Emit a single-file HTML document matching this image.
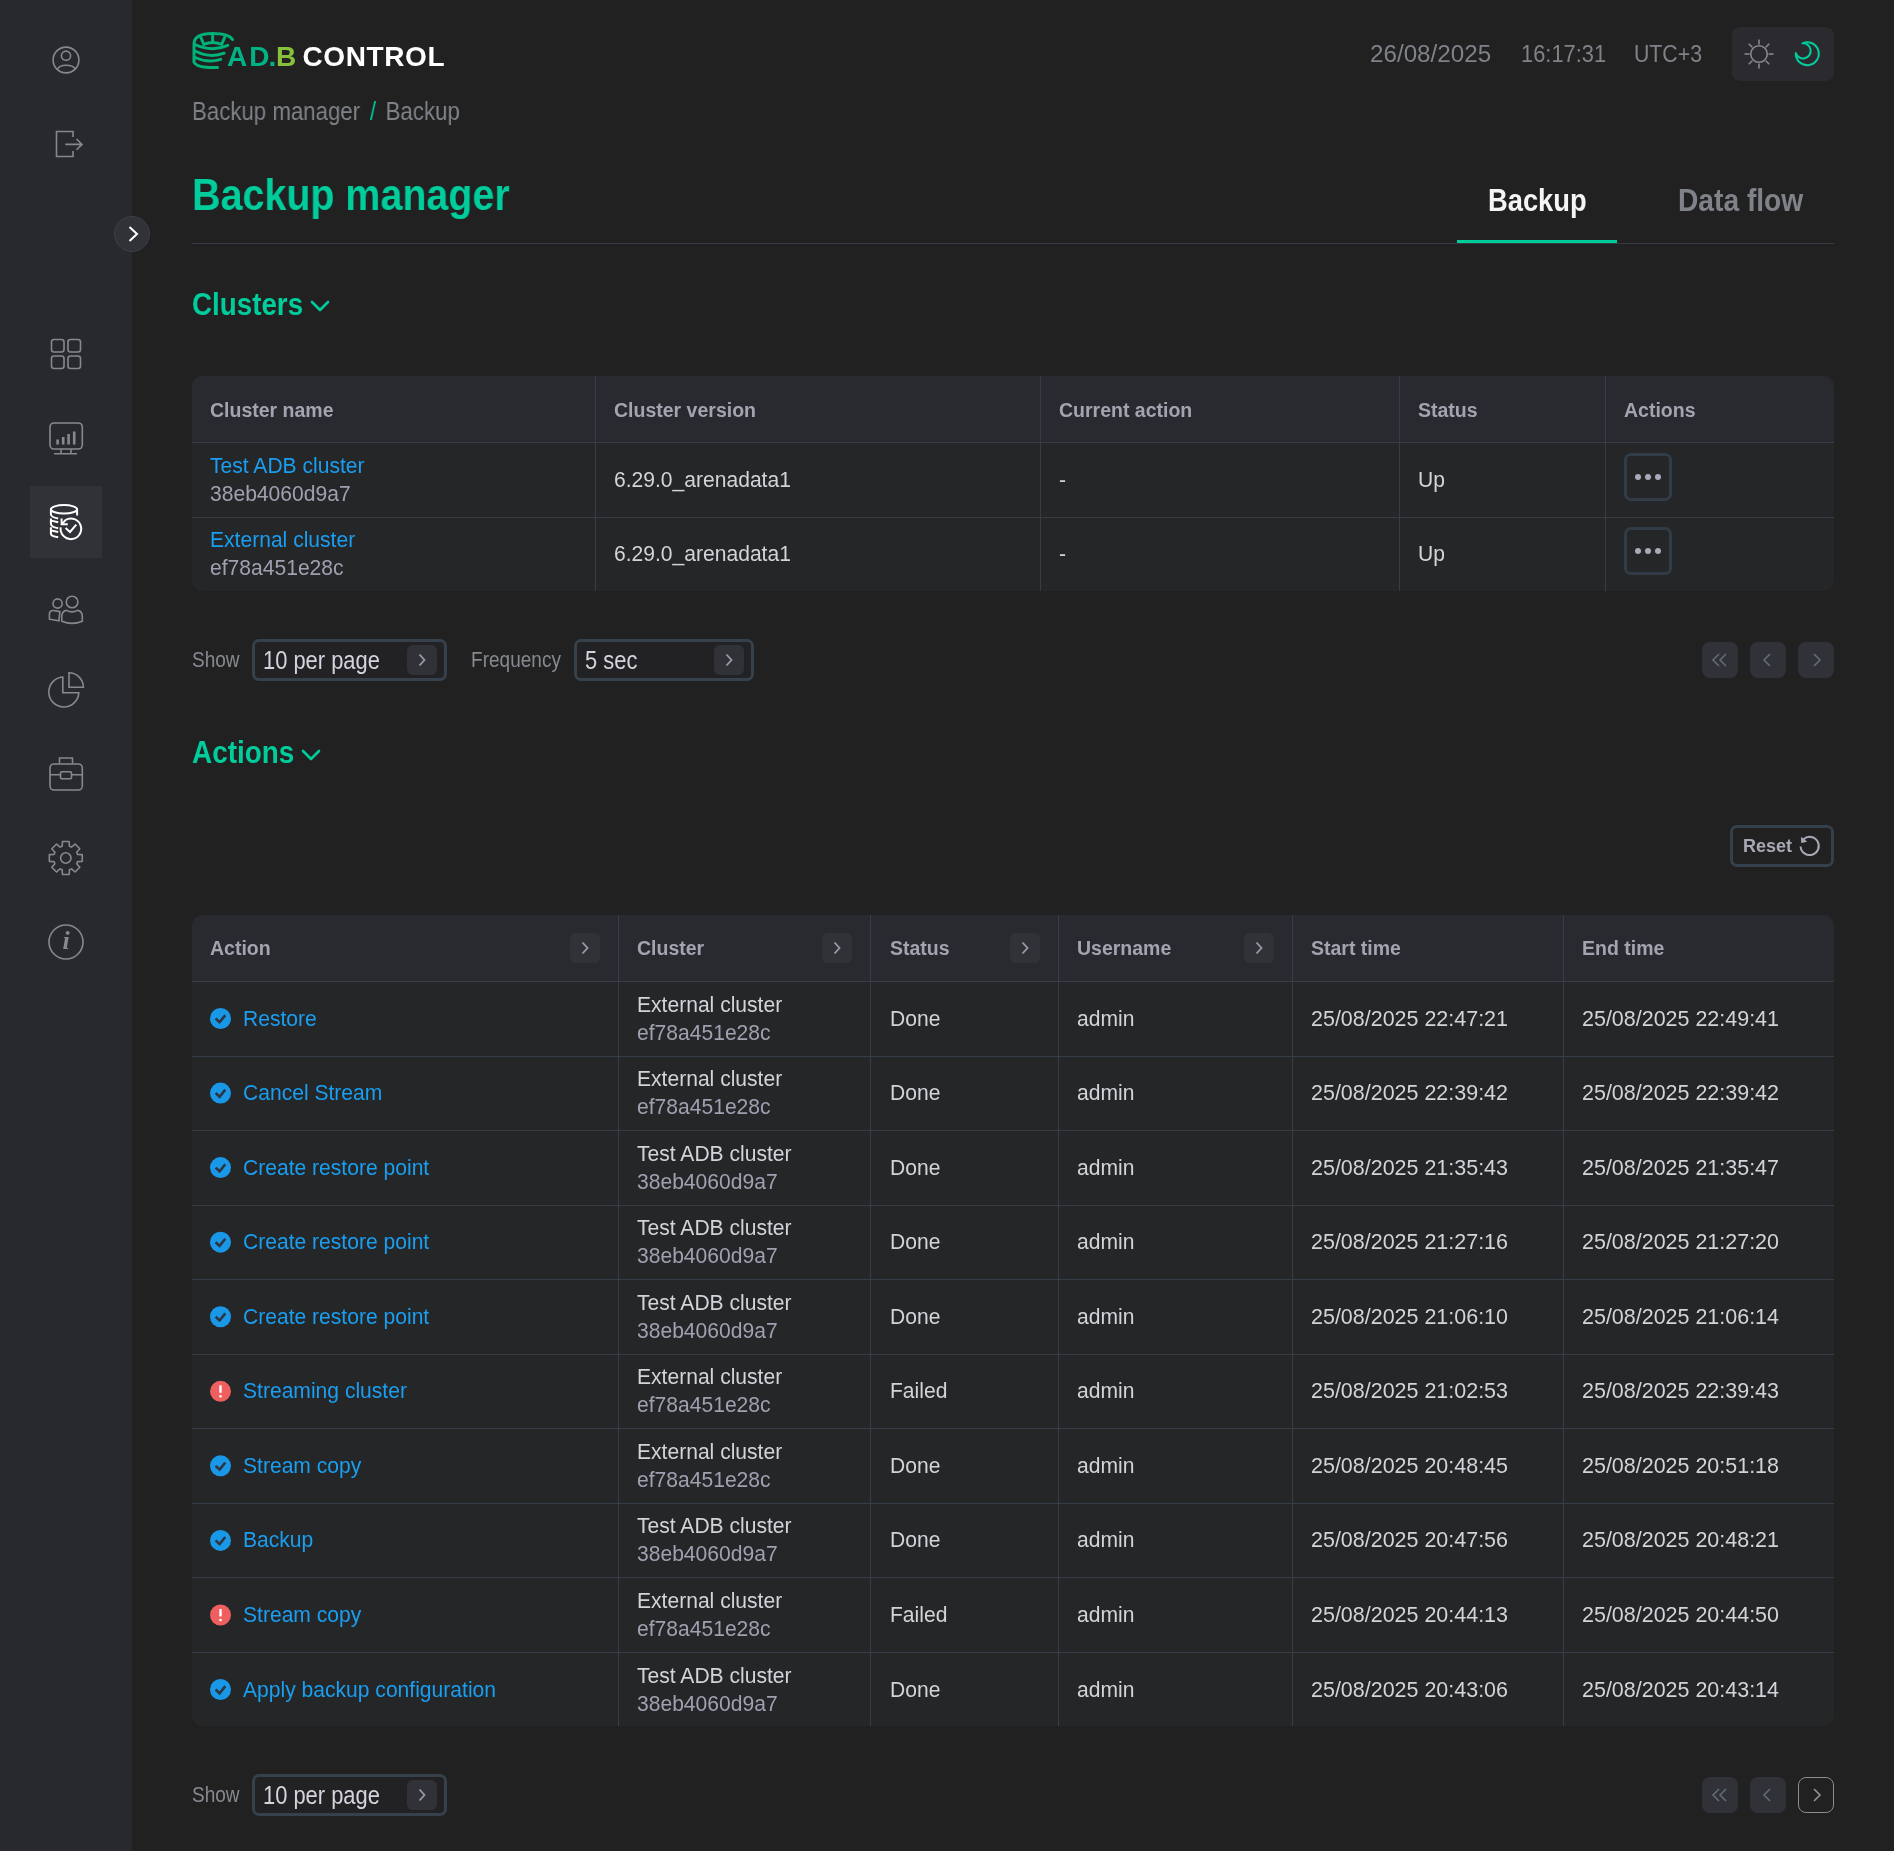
<!DOCTYPE html><html><head><meta charset="utf-8"><style>
*{margin:0;padding:0;box-sizing:border-box}
html,body{width:1894px;height:1851px;overflow:hidden;background:#212121;font-family:"Liberation Sans",sans-serif}
.a{position:absolute;white-space:nowrap}
#root{position:absolute;left:0;top:0;width:1894px;height:1851px;will-change:transform}
svg{position:absolute;overflow:visible}
</style></head><body><div id="root">

<div class="a" style="left:0;top:0;width:132px;height:1851px;background:#28292d"></div>
<div class="a" style="left:30px;top:486px;width:72px;height:72px;background:#313238"></div>
<div class="a" style="left:114px;top:216px;width:36px;height:36px;border-radius:50%;background:#313238;border:1px solid #3a414b"></div>
<svg style="left:0;top:0" width="1894" height="1851"><path d="M129.5 227 L137 234 L129.5 241" fill="none" stroke="#fff" stroke-width="2"/></svg>
<svg style="left:0;top:0" width="132" height="1000" fill="none" stroke="#85898f" stroke-width="1.6">
<circle cx="66" cy="60" r="12.9"/><circle cx="66" cy="55.7" r="4.6"/><path d="M57.8 68.8 C60 64 72 64 75.3 68.8"/>
<path d="M73 137 V131.5 H56.5 V156.5 H73 V151"/><path d="M65.3 144.4 H82 M76.5 139 L82 144.4 L76.5 149.8"/>
<rect x="51.5" y="339.5" width="12.5" height="12.5" rx="2.5"/><rect x="68" y="339.5" width="12.5" height="12.5" rx="2.5"/>
<rect x="51.5" y="356" width="12.5" height="12.5" rx="2.5"/><rect x="68" y="356" width="12.5" height="12.5" rx="2.5"/>
<rect x="50" y="423" width="32.3" height="26" rx="4"/><path d="M61 449 V453.5 M71 449 V453.5 M54 453.8 H77"/>
<path d="M57.6 444.5 V439.5 M63.2 444.5 V437 M68.6 444.5 V434 M74.2 444.5 V431.5" stroke-width="2.6"/>
<circle cx="57.6" cy="603.5" r="4.6"/><path d="M59.8 611.6 L53.6 610.5 Q49.4 610.4 49.4 614.2 V619.2 L59 620.9 Z"/>
<circle cx="72.1" cy="602" r="5.8"/><path d="M61.8 621.2 V616.5 Q61.8 611.3 66.4 610.4 Q72.1 613.4 77.7 610.4 Q82.3 611.3 82.3 616.5 V621.2 Q72.1 625.6 61.8 621.2 Z"/>
<path d="M62.8 677 A15 15 0 1 0 78.8 692.7 H62.8 Z"/><path d="M69 672.8 V687.3 H83.4 A14.5 14.5 0 0 0 69 672.8 Z"/>
<rect x="50" y="764" width="32.3" height="26" rx="4"/><path d="M59.5 763.5 V758 H72.5 V763.5 M50 774.8 H60.5 M71.5 774.8 H82.3"/><rect x="60.5" y="771.8" width="11" height="7" rx="1.2"/>
<circle cx="66" cy="942" r="17"/>
</svg>
<svg style="left:0;top:0" width="132" height="1000"><path d="M62.17 846.25 L62.46 841.53 L69.14 841.53 L69.43 846.25 L71.54 847.12 L75.08 844.00 L79.80 848.72 L76.68 852.26 L77.55 854.37 L82.27 854.66 L82.27 861.34 L77.55 861.63 L76.68 863.74 L79.80 867.28 L75.08 872.00 L71.54 868.88 L69.43 869.75 L69.14 874.47 L62.46 874.47 L62.17 869.75 L60.06 868.88 L56.52 872.00 L51.80 867.28 L54.92 863.74 L54.05 861.63 L49.33 861.34 L49.33 854.66 L54.05 854.37 L54.92 852.26 L51.80 848.72 L56.52 844.00 L60.06 847.12 Z" fill="none" stroke="#85898f" stroke-width="1.6" stroke-linejoin="round"/><circle cx="65.8" cy="858" r="5.2" fill="none" stroke="#85898f" stroke-width="1.6"/></svg>
<div class="a" style="left:57px;top:926px;width:18px;height:30px;font-family:'Liberation Serif';font-style:italic;font-weight:700;font-size:26px;color:#85898f;text-align:center;line-height:30px">i</div>
<svg style="left:0;top:0" width="132" height="1000" fill="none" stroke="#fff" stroke-width="2">
<ellipse cx="64" cy="509.3" rx="13.1" ry="4.2"/>
<path d="M50.9 509.3 V514.5 Q51.2 517.2 58.2 518.4"/>
<path d="M77.1 509.3 V515.5"/>
<path d="M50.9 518.6 V524 Q51.2 527 58.2 528.3 M51.2 520.6 L58.2 522.2"/>
<path d="M50.9 527.3 V533.6 Q51.2 536.4 58.2 537.2 M51.2 530.4 L58.2 531.9"/>
<path d="M60.7 527.4 A10.3 10.3 0 1 0 65.6 520 L62.2 523.6"/>
<path d="M61.6 518.5 V524.2 H67.8" stroke-linejoin="miter"/>
<path d="M65.6 528 L70 532 L76.3 524.7"/>
</svg>
<svg style="left:0;top:0" width="460" height="90" fill="none" stroke="#00b27a" stroke-width="3" stroke-linecap="round">
<path d="M217.5 67.5 Q196 68 194 62 V44 Q194 33.5 212.6 33.5 Q229 33.5 232.5 39.5"/>
<path d="M200.8 37.3 L203.8 44.3 Q212.6 40.5 221.6 44.3 L224.7 37.3"/>
<path d="M212.6 35 V41.5"/>
<path d="M195 44.5 Q212 52.5 227.8 45.3"/>
<path d="M195 51 Q210 58.5 224.2 53.2"/>
<path d="M195 57.5 Q208 63.5 220.7 59.4"/>
</svg>
<div class="a" style="left:227px;top:39px;font-size:28px;font-weight:700;line-height:36px;letter-spacing:2px;color:#00b386">AD</div>
<div class="a" style="left:268.5px;top:39px;font-size:28px;font-weight:700;line-height:36px;letter-spacing:0px;color:#00b386">.</div>
<div class="a" style="left:276px;top:39px;font-size:28px;font-weight:700;line-height:36px;letter-spacing:0px;color:#86c03c">B</div>
<div class="a" style="left:302.5px;top:39px;font-size:28px;font-weight:700;line-height:36px;letter-spacing:0.6px;color:#fff">CONTROL</div>
<div class="a" style="left:1370px;top:38px;font-size:23.5px;line-height:32px;color:#7f8288;transform:scaleX(1.03);transform-origin:0 0">26/08/2025</div>
<div class="a" style="left:1521px;top:38px;font-size:23.5px;line-height:32px;color:#7f8288;transform:scaleX(0.93);transform-origin:0 0">16:17:31</div>
<div class="a" style="left:1634px;top:38px;font-size:23.5px;line-height:32px;color:#7f8288;transform:scaleX(0.905);transform-origin:0 0">UTC+3</div>
<div class="a" style="left:1732px;top:27px;width:102px;height:54px;border-radius:8px;background:#2a2a2f"></div>
<svg style="left:0;top:0" width="1894" height="100" fill="none" stroke="#85898f" stroke-width="1.6"><circle cx="1759" cy="54" r="8.3"/><path d="M1768.50 54.00 L1773.50 54.00"/><path d="M1765.72 60.72 L1769.25 64.25"/><path d="M1759.00 63.50 L1759.00 68.50"/><path d="M1752.28 60.72 L1748.75 64.25"/><path d="M1749.50 54.00 L1744.50 54.00"/><path d="M1752.28 47.28 L1748.75 43.75"/><path d="M1759.00 44.50 L1759.00 39.50"/><path d="M1765.72 47.28 L1769.25 43.75"/></svg>
<svg style="left:0;top:0" width="1894" height="100" fill="none" stroke="#00cc9c" stroke-width="2" stroke-linejoin="round"><path d="M1802.4 43.3 A11.5 11.5 0 1 1 1795.8 53 A7.6 7.6 0 1 0 1802.4 43.3 Z"/></svg>
<div class="a" style="left:192px;top:96px;font-size:25.5px;line-height:30px;color:#7f8288;transform:scaleX(0.872);transform-origin:0 0">Backup manager <span style="color:#00cc9c;padding:0 4px">/</span> Backup</div>
<div class="a" style="left:192px;top:171.5px;font-size:44.5px;font-weight:700;line-height:46px;color:#00cc9c;transform:scaleX(0.886);transform-origin:0 0">Backup manager</div>
<div class="a" style="left:1488px;top:182.5px;font-size:31.3px;font-weight:700;line-height:36px;color:#f5f5f5;transform:scaleX(0.873);transform-origin:0 0">Backup</div>
<div class="a" style="left:1678px;top:182.5px;font-size:31.3px;font-weight:700;line-height:36px;color:#7f8288;transform:scaleX(0.9);transform-origin:0 0">Data flow</div>
<div class="a" style="left:192px;top:243px;width:1642px;height:1px;background:#363c44"></div>
<div class="a" style="left:1457px;top:240px;width:160px;height:3px;background:#00cc9c"></div>
<div class="a" style="left:192px;top:287.5px;font-size:31.2px;font-weight:700;line-height:34px;color:#00cc9c;transform:scaleX(0.89);transform-origin:0 0">Clusters</div>
<svg style="left:0;top:0" width="400" height="1000" fill="none" stroke="#00cc9c" stroke-width="2.6" stroke-linecap="round" stroke-linejoin="round"><path d="M312 302 L320.0 310 L328 302"/></svg>
<div class="a" style="left:192px;top:735.5px;font-size:31.2px;font-weight:700;line-height:34px;color:#00cc9c;transform:scaleX(0.895);transform-origin:0 0">Actions</div>
<svg style="left:0;top:0" width="400" height="1000" fill="none" stroke="#00cc9c" stroke-width="2.6" stroke-linecap="round" stroke-linejoin="round"><path d="M303 751 L311.0 759 L319 751"/></svg>
<div class="a" style="left:192px;top:376px;width:1642px;height:215px;border-radius:10px;background:#252628;overflow:hidden"><div style="position:absolute;left:0;top:0;width:100%;height:66px;background:#292a2f"></div></div>
<div class="a" style="left:192px;top:442px;width:1642px;height:1px;background:#353d46"></div>
<div class="a" style="left:192px;top:517px;width:1642px;height:1px;background:#353d46"></div>
<div class="a" style="left:595px;top:376px;width:1px;height:215px;background:#353d46"></div>
<div class="a" style="left:1040px;top:376px;width:1px;height:215px;background:#353d46"></div>
<div class="a" style="left:1399px;top:376px;width:1px;height:215px;background:#353d46"></div>
<div class="a" style="left:1605px;top:376px;width:1px;height:215px;background:#353d46"></div>
<div class="a" style="left:210px;top:396px;font-size:19.5px;font-weight:700;line-height:28px;color:#a3a4b0">Cluster name</div>
<div class="a" style="left:614px;top:396px;font-size:19.5px;font-weight:700;line-height:28px;color:#a3a4b0">Cluster version</div>
<div class="a" style="left:1059px;top:396px;font-size:19.5px;font-weight:700;line-height:28px;color:#a3a4b0">Current action</div>
<div class="a" style="left:1418px;top:396px;font-size:19.5px;font-weight:700;line-height:28px;color:#a3a4b0">Status</div>
<div class="a" style="left:1624px;top:396px;font-size:19.5px;font-weight:700;line-height:28px;color:#a3a4b0">Actions</div>
<div class="a" style="left:210px;top:452px;font-size:21.40px;line-height:28px;color:#1a9ef0;transform:scaleX(0.985);transform-origin:0 0">Test ADB cluster</div>
<div class="a" style="left:210px;top:480px;font-size:21.40px;line-height:28px;color:#a0a0b0;transform:scaleX(0.985);transform-origin:0 0">38eb4060d9a7</div>
<div class="a" style="left:614px;top:466px;font-size:21.40px;line-height:28px;color:#d3d4da;transform:scaleX(0.985);transform-origin:0 0;">6.29.0_arenadata1</div>
<div class="a" style="left:1059px;top:466px;font-size:21.40px;line-height:28px;color:#d3d4da;transform:scaleX(0.985);transform-origin:0 0;">-</div>
<div class="a" style="left:1418px;top:466px;font-size:21.40px;line-height:28px;color:#d3d4da;transform:scaleX(0.985);transform-origin:0 0;">Up</div>
<div class="a" style="left:210px;top:526px;font-size:21.40px;line-height:28px;color:#1a9ef0;transform:scaleX(0.985);transform-origin:0 0">External cluster</div>
<div class="a" style="left:210px;top:554px;font-size:21.40px;line-height:28px;color:#a0a0b0;transform:scaleX(0.985);transform-origin:0 0">ef78a451e28c</div>
<div class="a" style="left:614px;top:540px;font-size:21.40px;line-height:28px;color:#d3d4da;transform:scaleX(0.985);transform-origin:0 0;">6.29.0_arenadata1</div>
<div class="a" style="left:1059px;top:540px;font-size:21.40px;line-height:28px;color:#d3d4da;transform:scaleX(0.985);transform-origin:0 0;">-</div>
<div class="a" style="left:1418px;top:540px;font-size:21.40px;line-height:28px;color:#d3d4da;transform:scaleX(0.985);transform-origin:0 0;">Up</div>
<div class="a" style="left:1624px;top:453px;width:48px;height:48px;border:3px solid #323c47;border-radius:7px"></div>
<div class="a" style="left:1634.8px;top:473.8px;width:6.4px;height:6.4px;border-radius:50%;background:#a9a9b8"></div>
<div class="a" style="left:1644.8px;top:473.8px;width:6.4px;height:6.4px;border-radius:50%;background:#a9a9b8"></div>
<div class="a" style="left:1654.8px;top:473.8px;width:6.4px;height:6.4px;border-radius:50%;background:#a9a9b8"></div>
<div class="a" style="left:1624px;top:527px;width:48px;height:48px;border:3px solid #323c47;border-radius:7px"></div>
<div class="a" style="left:1634.8px;top:547.8px;width:6.4px;height:6.4px;border-radius:50%;background:#a9a9b8"></div>
<div class="a" style="left:1644.8px;top:547.8px;width:6.4px;height:6.4px;border-radius:50%;background:#a9a9b8"></div>
<div class="a" style="left:1654.8px;top:547.8px;width:6.4px;height:6.4px;border-radius:50%;background:#a9a9b8"></div>
<div class="a" style="left:192px;top:646px;font-size:21.4px;line-height:28px;color:#868990;transform:scaleX(0.89);transform-origin:0 0">Show</div>
<div class="a" style="left:252px;top:639px;width:195px;height:42px;border:3px solid #36414c;border-radius:7px;background:#222224"></div>
<div class="a" style="left:263px;top:646px;font-size:25px;line-height:28px;color:#d4d4de;transform:scaleX(0.876);transform-origin:0 0">10 per page</div>
<div class="a" style="left:407px;top:645px;width:30px;height:30px;border-radius:6px;background:#313237"></div>
<svg style="left:0;top:0" width="1894" height="1851" fill="none" stroke="#9a9ba8" stroke-width="1.8"><path d="M419.5 654.5 L424.5 660 L419.5 665.5"/></svg>
<div class="a" style="left:471px;top:646px;font-size:21.4px;line-height:28px;color:#868990;transform:scaleX(0.89);transform-origin:0 0">Frequency</div>
<div class="a" style="left:574px;top:639px;width:180px;height:42px;border:3px solid #36414c;border-radius:7px;background:#222224"></div>
<div class="a" style="left:585px;top:646px;font-size:25px;line-height:28px;color:#d4d4de;transform:scaleX(0.876);transform-origin:0 0">5 sec</div>
<div class="a" style="left:714px;top:645px;width:30px;height:30px;border-radius:6px;background:#313237"></div>
<svg style="left:0;top:0" width="1894" height="1851" fill="none" stroke="#9a9ba8" stroke-width="1.8"><path d="M726.5 654.5 L731.5 660 L726.5 665.5"/></svg>
<div class="a" style="left:1702px;top:642px;width:36px;height:36px;border-radius:8px;background:#313237"></div>
<svg style="left:0;top:0" width="1894" height="1851" fill="none" stroke="#5f6c76" stroke-width="1.6"><path d="M1719 654 L1713 660 L1719 666 M1726 654 L1720 660 L1726 666"/></svg>
<div class="a" style="left:1750px;top:642px;width:36px;height:36px;border-radius:8px;background:#313237"></div>
<svg style="left:0;top:0" width="1894" height="1851" fill="none" stroke="#5f6c76" stroke-width="1.6"><path d="M1770 654 L1764 660 L1770 666"/></svg>
<div class="a" style="left:1798px;top:642px;width:36px;height:36px;border-radius:8px;background:#313237"></div>
<svg style="left:0;top:0" width="1894" height="1851" fill="none" stroke="#5f6c76" stroke-width="1.6"><path d="M1814 654 L1820 660 L1814 666"/></svg>
<div class="a" style="left:1730px;top:825px;width:104px;height:42px;border:3px solid #34404b;border-radius:7px"></div>
<div class="a" style="left:1743px;top:832px;font-size:18px;font-weight:700;line-height:28px;color:#a8a9b6">Reset</div>
<svg style="left:0;top:0" width="1894" height="1851"><path d="M1800.6 846.5 A9.1 9.1 0 1 0 1803.6 839.2" fill="none" stroke="#a8a9b6" stroke-width="2"/><path d="M1801 836.8 L1801.2 843 L1807.2 841.8 Z" fill="#a8a9b6"/></svg>
<div class="a" style="left:192px;top:915px;width:1642px;height:811px;border-radius:10px;background:#252628;overflow:hidden"><div style="position:absolute;left:0;top:0;width:100%;height:66px;background:#292a2f"></div></div>
<div class="a" style="left:192px;top:981px;width:1642px;height:1px;background:#353d46"></div>
<div class="a" style="left:192px;top:1056px;width:1642px;height:1px;background:#353d46"></div>
<div class="a" style="left:192px;top:1130px;width:1642px;height:1px;background:#353d46"></div>
<div class="a" style="left:192px;top:1205px;width:1642px;height:1px;background:#353d46"></div>
<div class="a" style="left:192px;top:1279px;width:1642px;height:1px;background:#353d46"></div>
<div class="a" style="left:192px;top:1354px;width:1642px;height:1px;background:#353d46"></div>
<div class="a" style="left:192px;top:1428px;width:1642px;height:1px;background:#353d46"></div>
<div class="a" style="left:192px;top:1503px;width:1642px;height:1px;background:#353d46"></div>
<div class="a" style="left:192px;top:1577px;width:1642px;height:1px;background:#353d46"></div>
<div class="a" style="left:192px;top:1652px;width:1642px;height:1px;background:#353d46"></div>
<div class="a" style="left:618px;top:915px;width:1px;height:811px;background:#353d46"></div>
<div class="a" style="left:870px;top:915px;width:1px;height:811px;background:#353d46"></div>
<div class="a" style="left:1058px;top:915px;width:1px;height:811px;background:#353d46"></div>
<div class="a" style="left:1292px;top:915px;width:1px;height:811px;background:#353d46"></div>
<div class="a" style="left:1563px;top:915px;width:1px;height:811px;background:#353d46"></div>
<div class="a" style="left:210px;top:934px;font-size:19.5px;font-weight:700;line-height:28px;color:#a3a4b0">Action</div>
<div class="a" style="left:570px;top:933px;width:30px;height:30px;border-radius:6px;background:#313237"></div>
<svg style="left:0;top:0" width="1894" height="1851" fill="none" stroke="#9a9ba8" stroke-width="1.8"><path d="M582.5 942.5 L587.5 948 L582.5 953.5"/></svg>
<div class="a" style="left:637px;top:934px;font-size:19.5px;font-weight:700;line-height:28px;color:#a3a4b0">Cluster</div>
<div class="a" style="left:822px;top:933px;width:30px;height:30px;border-radius:6px;background:#313237"></div>
<svg style="left:0;top:0" width="1894" height="1851" fill="none" stroke="#9a9ba8" stroke-width="1.8"><path d="M834.5 942.5 L839.5 948 L834.5 953.5"/></svg>
<div class="a" style="left:890px;top:934px;font-size:19.5px;font-weight:700;line-height:28px;color:#a3a4b0">Status</div>
<div class="a" style="left:1010px;top:933px;width:30px;height:30px;border-radius:6px;background:#313237"></div>
<svg style="left:0;top:0" width="1894" height="1851" fill="none" stroke="#9a9ba8" stroke-width="1.8"><path d="M1022.5 942.5 L1027.5 948 L1022.5 953.5"/></svg>
<div class="a" style="left:1077px;top:934px;font-size:19.5px;font-weight:700;line-height:28px;color:#a3a4b0">Username</div>
<div class="a" style="left:1244px;top:933px;width:30px;height:30px;border-radius:6px;background:#313237"></div>
<svg style="left:0;top:0" width="1894" height="1851" fill="none" stroke="#9a9ba8" stroke-width="1.8"><path d="M1256.5 942.5 L1261.5 948 L1256.5 953.5"/></svg>
<div class="a" style="left:1311px;top:934px;font-size:19.5px;font-weight:700;line-height:28px;color:#a3a4b0">Start time</div>
<div class="a" style="left:1582px;top:934px;font-size:19.5px;font-weight:700;line-height:28px;color:#a3a4b0">End time</div>
<svg style="left:0;top:0" width="1894" height="1851"><circle cx="220.5" cy="1018.50" r="10.5" fill="#1a98e8"/><path d="M215.6 1018.50 L219.6 1022.20 L225.3 1015.10" fill="none" stroke="#2f3540" stroke-width="2.6"/></svg>
<div class="a" style="left:243px;top:1004.5px;font-size:21.40px;line-height:28px;color:#1a9ef0;transform:scaleX(0.985);transform-origin:0 0;">Restore</div>
<div class="a" style="left:637px;top:990.5px;font-size:21.40px;line-height:28px;color:#d3d4da;transform:scaleX(0.985);transform-origin:0 0">External cluster</div>
<div class="a" style="left:637px;top:1018.5px;font-size:21.40px;line-height:28px;color:#a0a0b0;transform:scaleX(0.985);transform-origin:0 0">ef78a451e28c</div>
<div class="a" style="left:890px;top:1004.5px;font-size:21.40px;line-height:28px;color:#d3d4da;transform:scaleX(0.985);transform-origin:0 0;">Done</div>
<div class="a" style="left:1077px;top:1004.5px;font-size:21.40px;line-height:28px;color:#d3d4da;transform:scaleX(0.985);transform-origin:0 0;">admin</div>
<div class="a" style="left:1311px;top:1004.5px;font-size:21.81px;line-height:28px;color:#d3d4da;transform:scaleX(0.985);transform-origin:0 0;">25/08/2025 22:47:21</div>
<div class="a" style="left:1582px;top:1004.5px;font-size:21.81px;line-height:28px;color:#d3d4da;transform:scaleX(0.985);transform-origin:0 0;">25/08/2025 22:49:41</div>
<svg style="left:0;top:0" width="1894" height="1851"><circle cx="220.5" cy="1093.06" r="10.5" fill="#1a98e8"/><path d="M215.6 1093.06 L219.6 1096.76 L225.3 1089.66" fill="none" stroke="#2f3540" stroke-width="2.6"/></svg>
<div class="a" style="left:243px;top:1079.06px;font-size:21.40px;line-height:28px;color:#1a9ef0;transform:scaleX(0.985);transform-origin:0 0;">Cancel Stream</div>
<div class="a" style="left:637px;top:1065.06px;font-size:21.40px;line-height:28px;color:#d3d4da;transform:scaleX(0.985);transform-origin:0 0">External cluster</div>
<div class="a" style="left:637px;top:1093.06px;font-size:21.40px;line-height:28px;color:#a0a0b0;transform:scaleX(0.985);transform-origin:0 0">ef78a451e28c</div>
<div class="a" style="left:890px;top:1079.06px;font-size:21.40px;line-height:28px;color:#d3d4da;transform:scaleX(0.985);transform-origin:0 0;">Done</div>
<div class="a" style="left:1077px;top:1079.06px;font-size:21.40px;line-height:28px;color:#d3d4da;transform:scaleX(0.985);transform-origin:0 0;">admin</div>
<div class="a" style="left:1311px;top:1079.06px;font-size:21.81px;line-height:28px;color:#d3d4da;transform:scaleX(0.985);transform-origin:0 0;">25/08/2025 22:39:42</div>
<div class="a" style="left:1582px;top:1079.06px;font-size:21.81px;line-height:28px;color:#d3d4da;transform:scaleX(0.985);transform-origin:0 0;">25/08/2025 22:39:42</div>
<svg style="left:0;top:0" width="1894" height="1851"><circle cx="220.5" cy="1167.62" r="10.5" fill="#1a98e8"/><path d="M215.6 1167.62 L219.6 1171.32 L225.3 1164.22" fill="none" stroke="#2f3540" stroke-width="2.6"/></svg>
<div class="a" style="left:243px;top:1153.62px;font-size:21.40px;line-height:28px;color:#1a9ef0;transform:scaleX(0.985);transform-origin:0 0;">Create restore point</div>
<div class="a" style="left:637px;top:1139.62px;font-size:21.40px;line-height:28px;color:#d3d4da;transform:scaleX(0.985);transform-origin:0 0">Test ADB cluster</div>
<div class="a" style="left:637px;top:1167.62px;font-size:21.40px;line-height:28px;color:#a0a0b0;transform:scaleX(0.985);transform-origin:0 0">38eb4060d9a7</div>
<div class="a" style="left:890px;top:1153.62px;font-size:21.40px;line-height:28px;color:#d3d4da;transform:scaleX(0.985);transform-origin:0 0;">Done</div>
<div class="a" style="left:1077px;top:1153.62px;font-size:21.40px;line-height:28px;color:#d3d4da;transform:scaleX(0.985);transform-origin:0 0;">admin</div>
<div class="a" style="left:1311px;top:1153.62px;font-size:21.81px;line-height:28px;color:#d3d4da;transform:scaleX(0.985);transform-origin:0 0;">25/08/2025 21:35:43</div>
<div class="a" style="left:1582px;top:1153.62px;font-size:21.81px;line-height:28px;color:#d3d4da;transform:scaleX(0.985);transform-origin:0 0;">25/08/2025 21:35:47</div>
<svg style="left:0;top:0" width="1894" height="1851"><circle cx="220.5" cy="1242.18" r="10.5" fill="#1a98e8"/><path d="M215.6 1242.18 L219.6 1245.88 L225.3 1238.78" fill="none" stroke="#2f3540" stroke-width="2.6"/></svg>
<div class="a" style="left:243px;top:1228.18px;font-size:21.40px;line-height:28px;color:#1a9ef0;transform:scaleX(0.985);transform-origin:0 0;">Create restore point</div>
<div class="a" style="left:637px;top:1214.18px;font-size:21.40px;line-height:28px;color:#d3d4da;transform:scaleX(0.985);transform-origin:0 0">Test ADB cluster</div>
<div class="a" style="left:637px;top:1242.18px;font-size:21.40px;line-height:28px;color:#a0a0b0;transform:scaleX(0.985);transform-origin:0 0">38eb4060d9a7</div>
<div class="a" style="left:890px;top:1228.18px;font-size:21.40px;line-height:28px;color:#d3d4da;transform:scaleX(0.985);transform-origin:0 0;">Done</div>
<div class="a" style="left:1077px;top:1228.18px;font-size:21.40px;line-height:28px;color:#d3d4da;transform:scaleX(0.985);transform-origin:0 0;">admin</div>
<div class="a" style="left:1311px;top:1228.18px;font-size:21.81px;line-height:28px;color:#d3d4da;transform:scaleX(0.985);transform-origin:0 0;">25/08/2025 21:27:16</div>
<div class="a" style="left:1582px;top:1228.18px;font-size:21.81px;line-height:28px;color:#d3d4da;transform:scaleX(0.985);transform-origin:0 0;">25/08/2025 21:27:20</div>
<svg style="left:0;top:0" width="1894" height="1851"><circle cx="220.5" cy="1316.74" r="10.5" fill="#1a98e8"/><path d="M215.6 1316.74 L219.6 1320.44 L225.3 1313.34" fill="none" stroke="#2f3540" stroke-width="2.6"/></svg>
<div class="a" style="left:243px;top:1302.74px;font-size:21.40px;line-height:28px;color:#1a9ef0;transform:scaleX(0.985);transform-origin:0 0;">Create restore point</div>
<div class="a" style="left:637px;top:1288.74px;font-size:21.40px;line-height:28px;color:#d3d4da;transform:scaleX(0.985);transform-origin:0 0">Test ADB cluster</div>
<div class="a" style="left:637px;top:1316.74px;font-size:21.40px;line-height:28px;color:#a0a0b0;transform:scaleX(0.985);transform-origin:0 0">38eb4060d9a7</div>
<div class="a" style="left:890px;top:1302.74px;font-size:21.40px;line-height:28px;color:#d3d4da;transform:scaleX(0.985);transform-origin:0 0;">Done</div>
<div class="a" style="left:1077px;top:1302.74px;font-size:21.40px;line-height:28px;color:#d3d4da;transform:scaleX(0.985);transform-origin:0 0;">admin</div>
<div class="a" style="left:1311px;top:1302.74px;font-size:21.81px;line-height:28px;color:#d3d4da;transform:scaleX(0.985);transform-origin:0 0;">25/08/2025 21:06:10</div>
<div class="a" style="left:1582px;top:1302.74px;font-size:21.81px;line-height:28px;color:#d3d4da;transform:scaleX(0.985);transform-origin:0 0;">25/08/2025 21:06:14</div>
<svg style="left:0;top:0" width="1894" height="1851"><circle cx="220.5" cy="1391.30" r="10.5" fill="#ef5f5f"/><path d="M220.5 1385.30 V1392.80" stroke="#fff" stroke-width="2.4"/><circle cx="220.5" cy="1396.30" r="1.3" fill="#fff"/></svg>
<div class="a" style="left:243px;top:1377.3px;font-size:21.40px;line-height:28px;color:#1a9ef0;transform:scaleX(0.985);transform-origin:0 0;">Streaming cluster</div>
<div class="a" style="left:637px;top:1363.3px;font-size:21.40px;line-height:28px;color:#d3d4da;transform:scaleX(0.985);transform-origin:0 0">External cluster</div>
<div class="a" style="left:637px;top:1391.3px;font-size:21.40px;line-height:28px;color:#a0a0b0;transform:scaleX(0.985);transform-origin:0 0">ef78a451e28c</div>
<div class="a" style="left:890px;top:1377.3px;font-size:21.40px;line-height:28px;color:#d3d4da;transform:scaleX(0.985);transform-origin:0 0;">Failed</div>
<div class="a" style="left:1077px;top:1377.3px;font-size:21.40px;line-height:28px;color:#d3d4da;transform:scaleX(0.985);transform-origin:0 0;">admin</div>
<div class="a" style="left:1311px;top:1377.3px;font-size:21.81px;line-height:28px;color:#d3d4da;transform:scaleX(0.985);transform-origin:0 0;">25/08/2025 21:02:53</div>
<div class="a" style="left:1582px;top:1377.3px;font-size:21.81px;line-height:28px;color:#d3d4da;transform:scaleX(0.985);transform-origin:0 0;">25/08/2025 22:39:43</div>
<svg style="left:0;top:0" width="1894" height="1851"><circle cx="220.5" cy="1465.86" r="10.5" fill="#1a98e8"/><path d="M215.6 1465.86 L219.6 1469.56 L225.3 1462.46" fill="none" stroke="#2f3540" stroke-width="2.6"/></svg>
<div class="a" style="left:243px;top:1451.8600000000001px;font-size:21.40px;line-height:28px;color:#1a9ef0;transform:scaleX(0.985);transform-origin:0 0;">Stream copy</div>
<div class="a" style="left:637px;top:1437.8600000000001px;font-size:21.40px;line-height:28px;color:#d3d4da;transform:scaleX(0.985);transform-origin:0 0">External cluster</div>
<div class="a" style="left:637px;top:1465.8600000000001px;font-size:21.40px;line-height:28px;color:#a0a0b0;transform:scaleX(0.985);transform-origin:0 0">ef78a451e28c</div>
<div class="a" style="left:890px;top:1451.8600000000001px;font-size:21.40px;line-height:28px;color:#d3d4da;transform:scaleX(0.985);transform-origin:0 0;">Done</div>
<div class="a" style="left:1077px;top:1451.8600000000001px;font-size:21.40px;line-height:28px;color:#d3d4da;transform:scaleX(0.985);transform-origin:0 0;">admin</div>
<div class="a" style="left:1311px;top:1451.8600000000001px;font-size:21.81px;line-height:28px;color:#d3d4da;transform:scaleX(0.985);transform-origin:0 0;">25/08/2025 20:48:45</div>
<div class="a" style="left:1582px;top:1451.8600000000001px;font-size:21.81px;line-height:28px;color:#d3d4da;transform:scaleX(0.985);transform-origin:0 0;">25/08/2025 20:51:18</div>
<svg style="left:0;top:0" width="1894" height="1851"><circle cx="220.5" cy="1540.42" r="10.5" fill="#1a98e8"/><path d="M215.6 1540.42 L219.6 1544.12 L225.3 1537.02" fill="none" stroke="#2f3540" stroke-width="2.6"/></svg>
<div class="a" style="left:243px;top:1526.42px;font-size:21.40px;line-height:28px;color:#1a9ef0;transform:scaleX(0.985);transform-origin:0 0;">Backup</div>
<div class="a" style="left:637px;top:1512.42px;font-size:21.40px;line-height:28px;color:#d3d4da;transform:scaleX(0.985);transform-origin:0 0">Test ADB cluster</div>
<div class="a" style="left:637px;top:1540.42px;font-size:21.40px;line-height:28px;color:#a0a0b0;transform:scaleX(0.985);transform-origin:0 0">38eb4060d9a7</div>
<div class="a" style="left:890px;top:1526.42px;font-size:21.40px;line-height:28px;color:#d3d4da;transform:scaleX(0.985);transform-origin:0 0;">Done</div>
<div class="a" style="left:1077px;top:1526.42px;font-size:21.40px;line-height:28px;color:#d3d4da;transform:scaleX(0.985);transform-origin:0 0;">admin</div>
<div class="a" style="left:1311px;top:1526.42px;font-size:21.81px;line-height:28px;color:#d3d4da;transform:scaleX(0.985);transform-origin:0 0;">25/08/2025 20:47:56</div>
<div class="a" style="left:1582px;top:1526.42px;font-size:21.81px;line-height:28px;color:#d3d4da;transform:scaleX(0.985);transform-origin:0 0;">25/08/2025 20:48:21</div>
<svg style="left:0;top:0" width="1894" height="1851"><circle cx="220.5" cy="1614.98" r="10.5" fill="#ef5f5f"/><path d="M220.5 1608.98 V1616.48" stroke="#fff" stroke-width="2.4"/><circle cx="220.5" cy="1619.98" r="1.3" fill="#fff"/></svg>
<div class="a" style="left:243px;top:1600.98px;font-size:21.40px;line-height:28px;color:#1a9ef0;transform:scaleX(0.985);transform-origin:0 0;">Stream copy</div>
<div class="a" style="left:637px;top:1586.98px;font-size:21.40px;line-height:28px;color:#d3d4da;transform:scaleX(0.985);transform-origin:0 0">External cluster</div>
<div class="a" style="left:637px;top:1614.98px;font-size:21.40px;line-height:28px;color:#a0a0b0;transform:scaleX(0.985);transform-origin:0 0">ef78a451e28c</div>
<div class="a" style="left:890px;top:1600.98px;font-size:21.40px;line-height:28px;color:#d3d4da;transform:scaleX(0.985);transform-origin:0 0;">Failed</div>
<div class="a" style="left:1077px;top:1600.98px;font-size:21.40px;line-height:28px;color:#d3d4da;transform:scaleX(0.985);transform-origin:0 0;">admin</div>
<div class="a" style="left:1311px;top:1600.98px;font-size:21.81px;line-height:28px;color:#d3d4da;transform:scaleX(0.985);transform-origin:0 0;">25/08/2025 20:44:13</div>
<div class="a" style="left:1582px;top:1600.98px;font-size:21.81px;line-height:28px;color:#d3d4da;transform:scaleX(0.985);transform-origin:0 0;">25/08/2025 20:44:50</div>
<svg style="left:0;top:0" width="1894" height="1851"><circle cx="220.5" cy="1689.54" r="10.5" fill="#1a98e8"/><path d="M215.6 1689.54 L219.6 1693.24 L225.3 1686.14" fill="none" stroke="#2f3540" stroke-width="2.6"/></svg>
<div class="a" style="left:243px;top:1675.54px;font-size:21.40px;line-height:28px;color:#1a9ef0;transform:scaleX(0.985);transform-origin:0 0;">Apply backup configuration</div>
<div class="a" style="left:637px;top:1661.54px;font-size:21.40px;line-height:28px;color:#d3d4da;transform:scaleX(0.985);transform-origin:0 0">Test ADB cluster</div>
<div class="a" style="left:637px;top:1689.54px;font-size:21.40px;line-height:28px;color:#a0a0b0;transform:scaleX(0.985);transform-origin:0 0">38eb4060d9a7</div>
<div class="a" style="left:890px;top:1675.54px;font-size:21.40px;line-height:28px;color:#d3d4da;transform:scaleX(0.985);transform-origin:0 0;">Done</div>
<div class="a" style="left:1077px;top:1675.54px;font-size:21.40px;line-height:28px;color:#d3d4da;transform:scaleX(0.985);transform-origin:0 0;">admin</div>
<div class="a" style="left:1311px;top:1675.54px;font-size:21.81px;line-height:28px;color:#d3d4da;transform:scaleX(0.985);transform-origin:0 0;">25/08/2025 20:43:06</div>
<div class="a" style="left:1582px;top:1675.54px;font-size:21.81px;line-height:28px;color:#d3d4da;transform:scaleX(0.985);transform-origin:0 0;">25/08/2025 20:43:14</div>
<div class="a" style="left:192px;top:1781px;font-size:21.4px;line-height:28px;color:#868990;transform:scaleX(0.89);transform-origin:0 0">Show</div>
<div class="a" style="left:252px;top:1774px;width:195px;height:42px;border:3px solid #36414c;border-radius:7px;background:#222224"></div>
<div class="a" style="left:263px;top:1781px;font-size:25px;line-height:28px;color:#d4d4de;transform:scaleX(0.876);transform-origin:0 0">10 per page</div>
<div class="a" style="left:407px;top:1780px;width:30px;height:30px;border-radius:6px;background:#313237"></div>
<svg style="left:0;top:0" width="1894" height="1851" fill="none" stroke="#9a9ba8" stroke-width="1.8"><path d="M419.5 1789.5 L424.5 1795 L419.5 1800.5"/></svg>
<div class="a" style="left:1702px;top:1777px;width:36px;height:36px;border-radius:8px;background:#313237"></div>
<svg style="left:0;top:0" width="1894" height="1851" fill="none" stroke="#5f6c76" stroke-width="1.6"><path d="M1719 1789 L1713 1795 L1719 1801 M1726 1789 L1720 1795 L1726 1801"/></svg>
<div class="a" style="left:1750px;top:1777px;width:36px;height:36px;border-radius:8px;background:#313237"></div>
<svg style="left:0;top:0" width="1894" height="1851" fill="none" stroke="#5f6c76" stroke-width="1.6"><path d="M1770 1789 L1764 1795 L1770 1801"/></svg>
<div class="a" style="left:1798px;top:1777px;width:36px;height:36px;border-radius:8px;border:1.5px solid #8a8d92"></div>
<svg style="left:0;top:0" width="1894" height="1851" fill="none" stroke="#8f9398" stroke-width="1.6"><path d="M1814 1789 L1820 1795 L1814 1801"/></svg>
</div></body></html>
